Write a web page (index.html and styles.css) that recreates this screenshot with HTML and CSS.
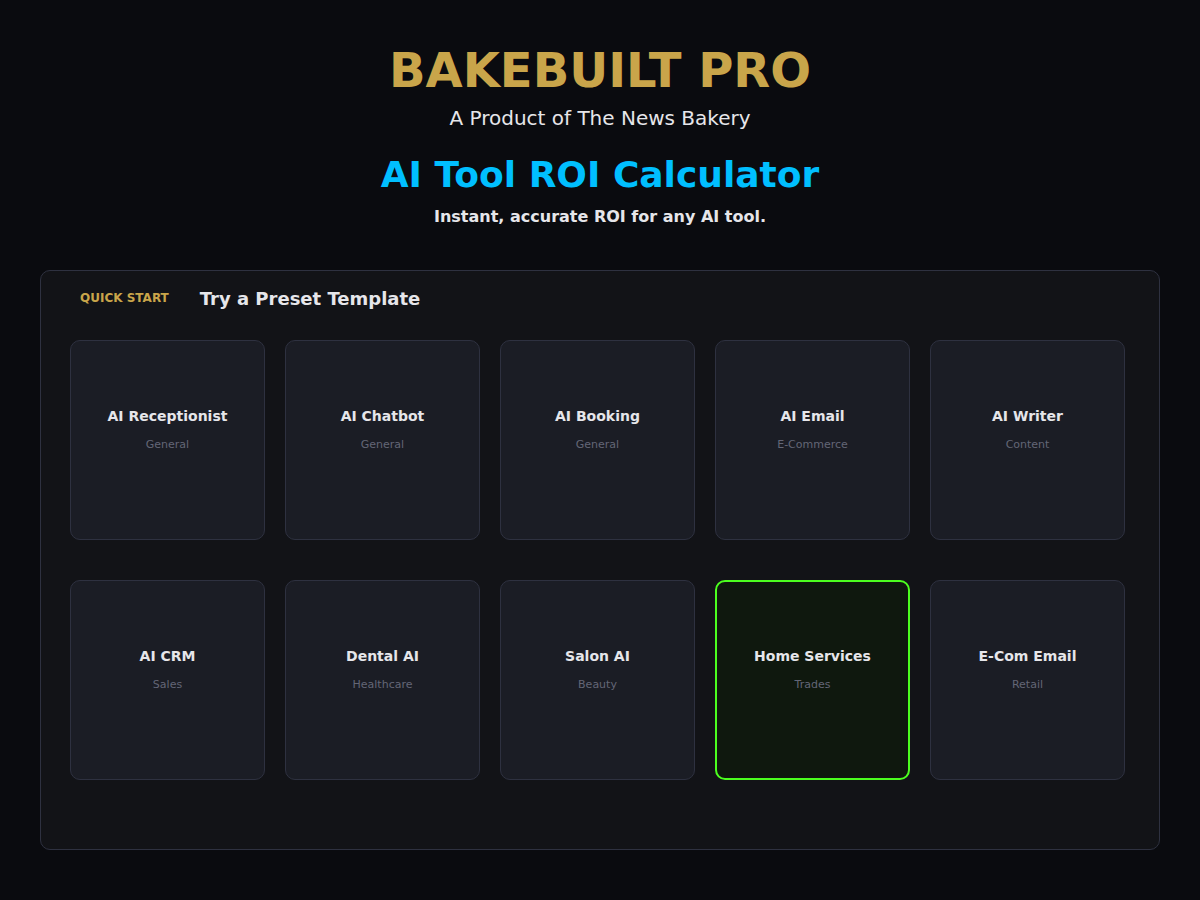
FILE: index.html
```html
<!DOCTYPE html>
<html lang="en">
<head>
<meta charset="utf-8">
<title>BakeBuilt Pro — AI Tool ROI Calculator</title>
<link rel="stylesheet" href="styles.css">
</head>
<body>
  <header class="hero">
    <h1 class="brand">BAKEBUILT PRO</h1>
    <p class="byline">A Product of The News Bakery</p>
    <h2 class="tool-title">AI Tool ROI Calculator</h2>
    <p class="tagline">Instant, accurate ROI for any AI tool.</p>
  </header>

  <section class="panel">
    <div class="panel-head">
      <span class="eyebrow">QUICK START</span>
      <h3 class="panel-title">Try a Preset Template</h3>
    </div>
    <div class="preset-grid">
      <button class="preset"><span class="preset-name">AI Receptionist</span><span class="preset-cat">General</span></button>
      <button class="preset"><span class="preset-name">AI Chatbot</span><span class="preset-cat">General</span></button>
      <button class="preset"><span class="preset-name">AI Booking</span><span class="preset-cat">General</span></button>
      <button class="preset"><span class="preset-name">AI Email</span><span class="preset-cat">E-Commerce</span></button>
      <button class="preset"><span class="preset-name">AI Writer</span><span class="preset-cat">Content</span></button>
      <button class="preset"><span class="preset-name">AI CRM</span><span class="preset-cat">Sales</span></button>
      <button class="preset"><span class="preset-name">Dental AI</span><span class="preset-cat">Healthcare</span></button>
      <button class="preset"><span class="preset-name">Salon AI</span><span class="preset-cat">Beauty</span></button>
      <button class="preset is-active"><span class="preset-name">Home Services</span><span class="preset-cat">Trades</span></button>
      <button class="preset"><span class="preset-name">E-Com Email</span><span class="preset-cat">Retail</span></button>
    </div>
  </section>
</body>
</html>
```

FILE: styles.css
```css
* {
  box-sizing: border-box;
}

html, body {
  margin: 0;
  padding: 0;
}

body {
  background: #0a0b0f;
  color: #e6e6ea;
  font-family: "DejaVu Sans", "Liberation Sans", sans-serif;
  padding: 40px 40px 50px;
}

.hero {
  text-align: center;
}

.brand {
  margin: 0;
  font-size: 48px;
  line-height: 60px;
  font-weight: bold;
  color: #c9a54a;
}

.byline {
  margin: 6px 0 0;
  font-size: 20px;
  line-height: 24px;
  color: #e6e6ea;
}

.tool-title {
  margin: 23px 0 0;
  font-size: 36px;
  line-height: 44px;
  font-weight: bold;
  color: #00bfff;
}

.tagline {
  margin: 10px 0 0;
  font-size: 16px;
  line-height: 20px;
  font-weight: bold;
  color: #e6e6ea;
}

.panel {
  margin-top: 43px;
  background: #121317;
  border: 1px solid #2e3140;
  border-radius: 10px;
  padding: 15px 29px 69px;
}

.panel-head {
  display: flex;
  align-items: center;
  gap: 31px;
  padding-left: 10px;
  height: 24px;
}

.eyebrow {
  font-size: 12px;
  font-weight: bold;
  color: #c9a54a;
}

.panel-title {
  margin: 0;
  font-size: 18px;
  font-weight: bold;
  color: #e6e6ea;
}

.preset-grid {
  margin-top: 30px;
  display: grid;
  grid-template-columns: repeat(5, 195px);
  grid-auto-rows: 200px;
  column-gap: 20px;
  row-gap: 40px;
}

.preset {
  display: flex;
  flex-direction: column;
  align-items: center;
  justify-content: flex-start;
  gap: 14px;
  padding: 67px 8px 0;
  background: #1b1d25;
  border: 1px solid #2e3140;
  border-radius: 10px;
  font-family: inherit;
  cursor: pointer;
}

.preset.is-active {
  background: #0f180e;
  border: 2px solid #4cff1f;
  padding-top: 66px;
}

.preset-name {
  font-size: 14px;
  line-height: 16px;
  font-weight: bold;
  color: #e6e6ea;
}

.preset-cat {
  font-size: 11px;
  line-height: 13px;
  color: #636676;
}
```
